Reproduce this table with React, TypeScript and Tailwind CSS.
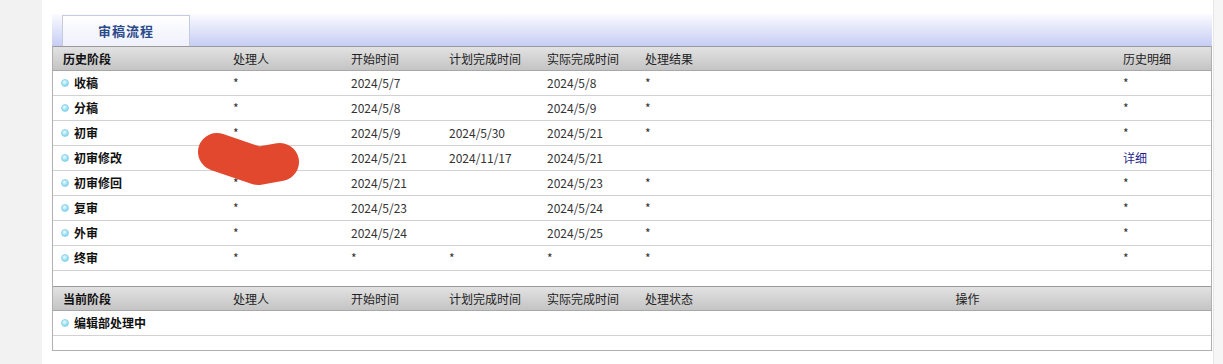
import React from "react";

const font = { fontFamily: '"Noto Sans CJK SC", "Liberation Sans", sans-serif' };

const cols = "grid grid-cols-[170px_118px_98px_98px_98px_478px_100px]";
const cols2 = "grid grid-cols-[170px_118px_98px_98px_98px_87px_491px]";

type Row = { stage: string; who: string; start: string; plan: string; actual: string; result: string; detail: string; link?: boolean };

const rows: Row[] = [
  { stage: "收稿", who: "*", start: "2024/5/7", plan: "", actual: "2024/5/8", result: "*", detail: "*" },
  { stage: "分稿", who: "*", start: "2024/5/8", plan: "", actual: "2024/5/9", result: "*", detail: "*" },
  { stage: "初审", who: "*", start: "2024/5/9", plan: "2024/5/30", actual: "2024/5/21", result: "*", detail: "*" },
  { stage: "初审修改", who: "", start: "2024/5/21", plan: "2024/11/17", actual: "2024/5/21", result: "", detail: "详细", link: true },
  { stage: "初审修回", who: "*", start: "2024/5/21", plan: "", actual: "2024/5/23", result: "*", detail: "*" },
  { stage: "复审", who: "*", start: "2024/5/23", plan: "", actual: "2024/5/24", result: "*", detail: "*" },
  { stage: "外审", who: "*", start: "2024/5/24", plan: "", actual: "2024/5/25", result: "*", detail: "*" },
  { stage: "终审", who: "*", start: "*", plan: "*", actual: "*", result: "*", detail: "*" },
];

function Bullet() {
  return (
    <span className="inline-block w-[8px] h-[8px] rounded-full ml-[-2px] mr-[5px] border border-[#92d2ea] bg-[radial-gradient(circle_at_40%_35%,#f0fbff_0%,#8adcf4_65%,#62c2e4_100%)]" />
  );
}

function Cell({ children, className = "" }: { children?: React.ReactNode; className?: string }) {
  return <div className={`pl-[10px] flex items-center whitespace-nowrap ${className}`}>{children}</div>;
}

const headCls = "h-[25px] border-t border-t-[#9a9a9a] border-b border-b-[#a8a8a8] bg-[linear-gradient(#e2e2e2,#c4c4c4)] text-[12px] text-[#222]";
const rowCls = "h-[25px] border-b border-b-[#d2d2d2] bg-white text-[12px] text-[#333]";

export default function App() {
  return (
    <div className="relative w-[1223px] h-[364px] flex bg-white overflow-hidden" style={font}>
      <div className="w-[42px] h-full bg-[#f2f2f2]" />
      <div className="w-[1171px] h-full bg-white pt-[14px] pl-[10px] pr-[1px]">
        <div className="h-[32px] w-[1160px] pl-[10px] flex items-end bg-[linear-gradient(#fbfbff,#c6cdf4)]">
          <div className="w-[128px] h-[31px] border border-b-0 border-[#c6cbe0] bg-[linear-gradient(#ffffff,#eef0fb)] flex items-center justify-center text-[13px] font-bold text-[#2b4a8a] tracking-[1px]">
            审稿流程
          </div>
        </div>
        <div className="w-[1160px] border-l border-r border-b border-[#b0b0b0]">
          <div className={`${cols} ${headCls}`}>
            <Cell className="font-bold text-[#111]">历史阶段</Cell>
            <Cell>处理人</Cell>
            <Cell>开始时间</Cell>
            <Cell>计划完成时间</Cell>
            <Cell>实际完成时间</Cell>
            <Cell>处理结果</Cell>
            <Cell>历史明细</Cell>
          </div>
          {rows.map((r) => (
            <div key={r.stage} className={`${cols} ${rowCls}`}>
              <Cell className="font-bold text-[#111]">
                <Bullet />
                {r.stage}
              </Cell>
              <Cell>{r.who}</Cell>
              <Cell>{r.start}</Cell>
              <Cell>{r.plan}</Cell>
              <Cell>{r.actual}</Cell>
              <Cell>{r.result}</Cell>
              <Cell className={r.link ? "text-[#1f1f8f]" : ""}>{r.detail}</Cell>
            </div>
          ))}
          <div className="h-[15px] bg-white" />
          <div className={`${cols2} ${headCls}`}>
            <Cell className="font-bold text-[#111]">当前阶段</Cell>
            <Cell>处理人</Cell>
            <Cell>开始时间</Cell>
            <Cell>计划完成时间</Cell>
            <Cell>实际完成时间</Cell>
            <Cell>处理状态</Cell>
            <div className="flex items-center justify-center">操作</div>
          </div>
          <div className={`${cols2} ${rowCls}`}>
            <Cell className="font-bold text-[#111] col-span-2">
              <Bullet />
              编辑部处理中
            </Cell>
          </div>
          <div className="h-[14px] bg-white" />
        </div>
      </div>
      <div className="w-[10px] h-full bg-[#f6f6f6] border-l border-[#e6e6e6]" />
      <svg className="absolute left-0 top-0 pointer-events-none" width="1223" height="364" viewBox="0 0 1223 364">
        <polyline
          points="217,152 258,166 280,162"
          fill="none"
          stroke="#e2482d"
          strokeWidth="38"
          strokeLinecap="round"
          strokeLinejoin="round"
        />
      </svg>
    </div>
  );
}
